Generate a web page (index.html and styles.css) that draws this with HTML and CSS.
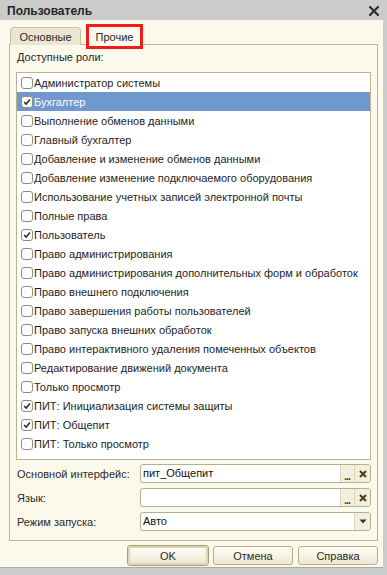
FILE: index.html
```html
<!DOCTYPE html>
<html lang="ru">
<head>
<meta charset="utf-8">
<title>Пользователь</title>
<link rel="stylesheet" href="styles.css">
</head>
<body>
<div class="window">
  <div class="titlebar">
    <span class="title">Пользователь</span>
    <svg class="close" width="10" height="10" viewBox="0 0 10 10"><path d="M1 1 L9 9 M9 1 L1 9" stroke="#2e2e2e" stroke-width="2.2" stroke-linecap="square"/></svg>
  </div>
  <div class="client">
    <div class="tabs">
      <div class="tab">Основные</div>
      <div class="tab active">Прочие</div>
    </div>
    <div class="panel">
      <div class="caption">Доступные роли:</div>
      <div class="list">
        <div class="row"><span class="cb"></span><span>Администратор системы</span></div>
        <div class="row sel"><span class="cb on"><svg viewBox="0 0 12 12"><path d="M2.5 6 L5 8.5 L9.5 3" fill="none" stroke="#2b2b2b" stroke-width="1.8"/></svg></span><span>Бухгалтер</span></div>
        <div class="row"><span class="cb"></span><span>Выполнение обменов данными</span></div>
        <div class="row"><span class="cb"></span><span>Главный бухгалтер</span></div>
        <div class="row"><span class="cb"></span><span>Добавление и изменение обменов данными</span></div>
        <div class="row"><span class="cb"></span><span>Добавление изменение подключаемого оборудования</span></div>
        <div class="row"><span class="cb"></span><span>Использование учетных записей электронной почты</span></div>
        <div class="row"><span class="cb"></span><span>Полные права</span></div>
        <div class="row"><span class="cb on"><svg viewBox="0 0 12 12"><path d="M2.5 6 L5 8.5 L9.5 3" fill="none" stroke="#2b2b2b" stroke-width="1.8"/></svg></span><span>Пользователь</span></div>
        <div class="row"><span class="cb"></span><span>Право администрирования</span></div>
        <div class="row"><span class="cb"></span><span>Право администрирования дополнительных форм и обработок</span></div>
        <div class="row"><span class="cb"></span><span>Право внешнего подключения</span></div>
        <div class="row"><span class="cb"></span><span>Право завершения работы пользователей</span></div>
        <div class="row"><span class="cb"></span><span>Право запуска внешних обработок</span></div>
        <div class="row"><span class="cb"></span><span>Право интерактивного удаления помеченных объектов</span></div>
        <div class="row"><span class="cb"></span><span>Редактирование движений документа</span></div>
        <div class="row"><span class="cb"></span><span>Только просмотр</span></div>
        <div class="row"><span class="cb on"><svg viewBox="0 0 12 12"><path d="M2.5 6 L5 8.5 L9.5 3" fill="none" stroke="#2b2b2b" stroke-width="1.8"/></svg></span><span>ПИТ: Инициализация системы защиты</span></div>
        <div class="row"><span class="cb on"><svg viewBox="0 0 12 12"><path d="M2.5 6 L5 8.5 L9.5 3" fill="none" stroke="#2b2b2b" stroke-width="1.8"/></svg></span><span>ПИТ: Общепит</span></div>
        <div class="row"><span class="cb"></span><span>ПИТ: Только просмотр</span></div>
      </div>
      <div class="fields">
        <div class="frow">
          <span class="flabel">Основной интерфейс:</span>
          <div class="field">
            <span class="val">пит_Общепит</span>
            <span class="fbtn dots">...</span>
            <span class="fbtn clear"><svg width="8" height="8" viewBox="0 0 8 8"><path d="M1 1 L7 7 M7 1 L1 7" stroke="#4b3c08" stroke-width="2"/></svg></span>
          </div>
        </div>
        <div class="frow">
          <span class="flabel">Язык:</span>
          <div class="field">
            <span class="val"></span>
            <span class="fbtn dots">...</span>
            <span class="fbtn clear"><svg width="8" height="8" viewBox="0 0 8 8"><path d="M1 1 L7 7 M7 1 L1 7" stroke="#4b3c08" stroke-width="2"/></svg></span>
          </div>
        </div>
        <div class="frow">
          <span class="flabel">Режим запуска:</span>
          <div class="field">
            <span class="val">Авто</span>
            <span class="fbtn clear"><svg width="8" height="5" viewBox="0 0 8 5"><path d="M0.5 0.5 L7.5 0.5 L4 4.5 Z" fill="#3a3320"/></svg></span>
          </div>
        </div>
      </div>
    </div>
    <div class="buttons">
      <div class="button default">OK</div>
      <div class="button">Отмена</div>
      <div class="button">Справка</div>
    </div>
  </div>
</div>
</body>
</html>
```

FILE: styles.css
```css
html, body {
  margin: 0;
  padding: 0;
}
body {
  width: 387px;
  height: 575px;
  overflow: hidden;
  background: #cbcbcb;
  font-family: "Liberation Sans", Arial, sans-serif;
  font-size: 11px;
  color: #1e1e1e;
}
.window {
  display: flex;
  flex-direction: column;
}
.titlebar {
  height: 20px;
  box-sizing: border-box;
  padding: 1px 8px 0 7px;
  display: flex;
  align-items: center;
  justify-content: space-between;
}
.title {
  font-weight: bold;
  font-size: 12px;
  color: #262626;
}
.close {
  display: block;
}
.client {
  width: 383px;
  height: 548px;
  box-sizing: border-box;
  background: #fbf9ec;
  border-bottom: 1px solid #a9a9a9;
  padding-top: 7px;
  display: flex;
  flex-direction: column;
}
.tabs {
  display: flex;
  height: 18px;
  padding-left: 10px;
  gap: 8px;
  position: relative;
  z-index: 1;
  align-items: flex-start;
}
.tab {
  height: 18px;
  box-sizing: border-box;
  border: 1px solid #c9c19d;
  border-bottom: none;
  border-radius: 4px 4px 0 0;
  background: #ebe6d2;
  width: 71px;
  display: flex;
  align-items: center;
  justify-content: center;
  color: #2a2a2a;
}
.tab.active {
  height: 19px;
  width: 51px;
  border: none;
  border-radius: 0;
  background: #fbf9ec;
  outline: 3px solid #f21a1a;
}
.panel {
  margin-left: 9px;
  margin-top: -1px;
  width: 369px;
  height: 497px;
  box-sizing: border-box;
  border: 1px solid #bdb591;
  padding: 5px 0 0 6px;
  display: flex;
  flex-direction: column;
}
.caption {
  height: 15px;
  line-height: 15px;
  padding-left: 1px;
}
.list {
  margin-top: 7px;
  width: 355px;
  height: 388px;
  box-sizing: border-box;
  border: 1px solid #bcb48f;
  background: #ffffff;
}
.row {
  height: 19px;
  display: flex;
  align-items: center;
  padding-left: 4px;
  white-space: nowrap;
}
.row.sel {
  background: #7098cc;
  color: #ffffff;
}
.cb {
  width: 12px;
  height: 12px;
  box-sizing: border-box;
  border: 1px solid #8e8e86;
  border-radius: 3px;
  background: #fdfdfb;
  margin-right: 1px;
  flex: none;
  display: flex;
}
.cb svg {
  width: 10px;
  height: 10px;
}
.fields {
  margin-top: 4px;
  display: flex;
  flex-direction: column;
  gap: 5px;
}
.frow {
  display: flex;
  height: 19px;
  align-items: center;
}
.flabel {
  width: 123px;
  padding-left: 1px;
  color: #2a2a2a;
}
.field {
  width: 231px;
  height: 19px;
  box-sizing: border-box;
  border: 1px solid #b7af8a;
  border-radius: 3px;
  background: #ffffff;
  display: flex;
  overflow: hidden;
}
.val {
  flex: 1;
  padding-left: 2px;
  line-height: 17px;
  color: #111;
}
.fbtn {
  background: #f3efde;
  border-left: 1px solid #ddd7bd;
  display: flex;
  align-items: center;
  justify-content: center;
}
.dots {
  width: 14px;
  align-items: flex-end;
  font-weight: bold;
  font-size: 11px;
  line-height: 12px;
  color: #4b3c08;
  letter-spacing: -1px;
  padding-right: 1px;
  box-sizing: border-box;
}
.clear {
  width: 15px;
}
.buttons {
  margin-top: 5px;
  display: flex;
  justify-content: flex-end;
  gap: 5px;
  padding-right: 5px;
}
.button {
  width: 80px;
  height: 19px;
  box-sizing: border-box;
  border: 1px solid #b6ae89;
  border-radius: 3px;
  background: linear-gradient(#fefdf8, #ede8d3);
  display: flex;
  align-items: center;
  justify-content: center;
  color: #2a2a2a;
}
.button.default {
  border: 2px solid #ddd6b6;
  box-shadow: 0 0 0 1px #a59d77;
}
```
